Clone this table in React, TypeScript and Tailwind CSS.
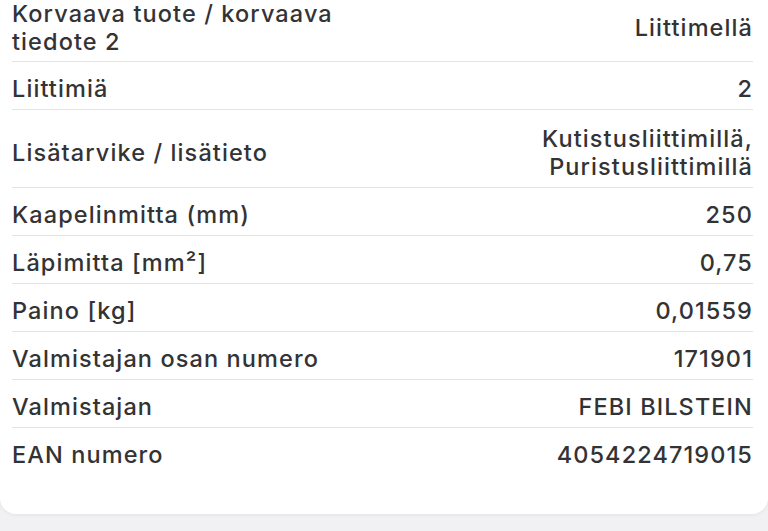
const rows: { label: string[]; value: string[]; className: string }[] = [
  {
    label: ["Korvaava tuote / korvaava", "tiedote 2"],
    value: ["Liittimellä"],
    className: "pt-0 pb-[5px] border-b",
  },
  { label: ["Liittimiä"], value: ["2"], className: "pt-[13px] pb-[6px] border-b" },
  {
    label: ["Lisätarvike / lisätieto"],
    value: ["Kutistusliittimillä,", "Puristusliittimillä"],
    className: "pt-[15px] pb-[6px] border-b",
  },
  { label: ["Kaapelinmitta (mm)"], value: ["250"], className: "pt-[13px] pb-[6px] border-b" },
  { label: ["Läpimitta [mm²]"], value: ["0,75"], className: "pt-[13px] pb-[6px] border-b" },
  { label: ["Paino [kg]"], value: ["0,01559"], className: "pt-[13px] pb-[6px] border-b" },
  { label: ["Valmistajan osan numero"], value: ["171901"], className: "pt-[13px] pb-[6px] border-b" },
  { label: ["Valmistajan"], value: ["FEBI BILSTEIN"], className: "pt-[13px] pb-[6px] border-b" },
  { label: ["EAN numero"], value: ["4054224719015"], className: "pt-[13px] pb-[6px]" },
];

function SpecRow({ label, value, className }: { label: string[]; value: string[]; className: string }) {
  return (
    <div className={`flex items-center justify-between gap-6 border-[#e4e4e6] ${className}`}>
      <div className="text-left">
        {label.map((line) => (
          <div key={line}>{line}</div>
        ))}
      </div>
      <div className="text-right">
        {value.map((line) => (
          <div key={line}>{line}</div>
        ))}
      </div>
    </div>
  );
}

export default function App() {
  return (
    <div className="h-[531px] w-[768px] overflow-hidden bg-[#f1f1f3] font-['Inter','Liberation_Sans',sans-serif]">
      <div className="rounded-b-[16px] bg-white pl-[12px] pr-[15px] pb-[39px] shadow-[0_1px_4px_rgba(0,0,0,0.06)]">
        <div className="text-[23.5px] font-medium leading-[28px] tracking-[1.1px] text-[#333335]">
          {rows.map((row) => (
            <SpecRow key={row.label[0]} {...row} />
          ))}
        </div>
      </div>
    </div>
  );
}
